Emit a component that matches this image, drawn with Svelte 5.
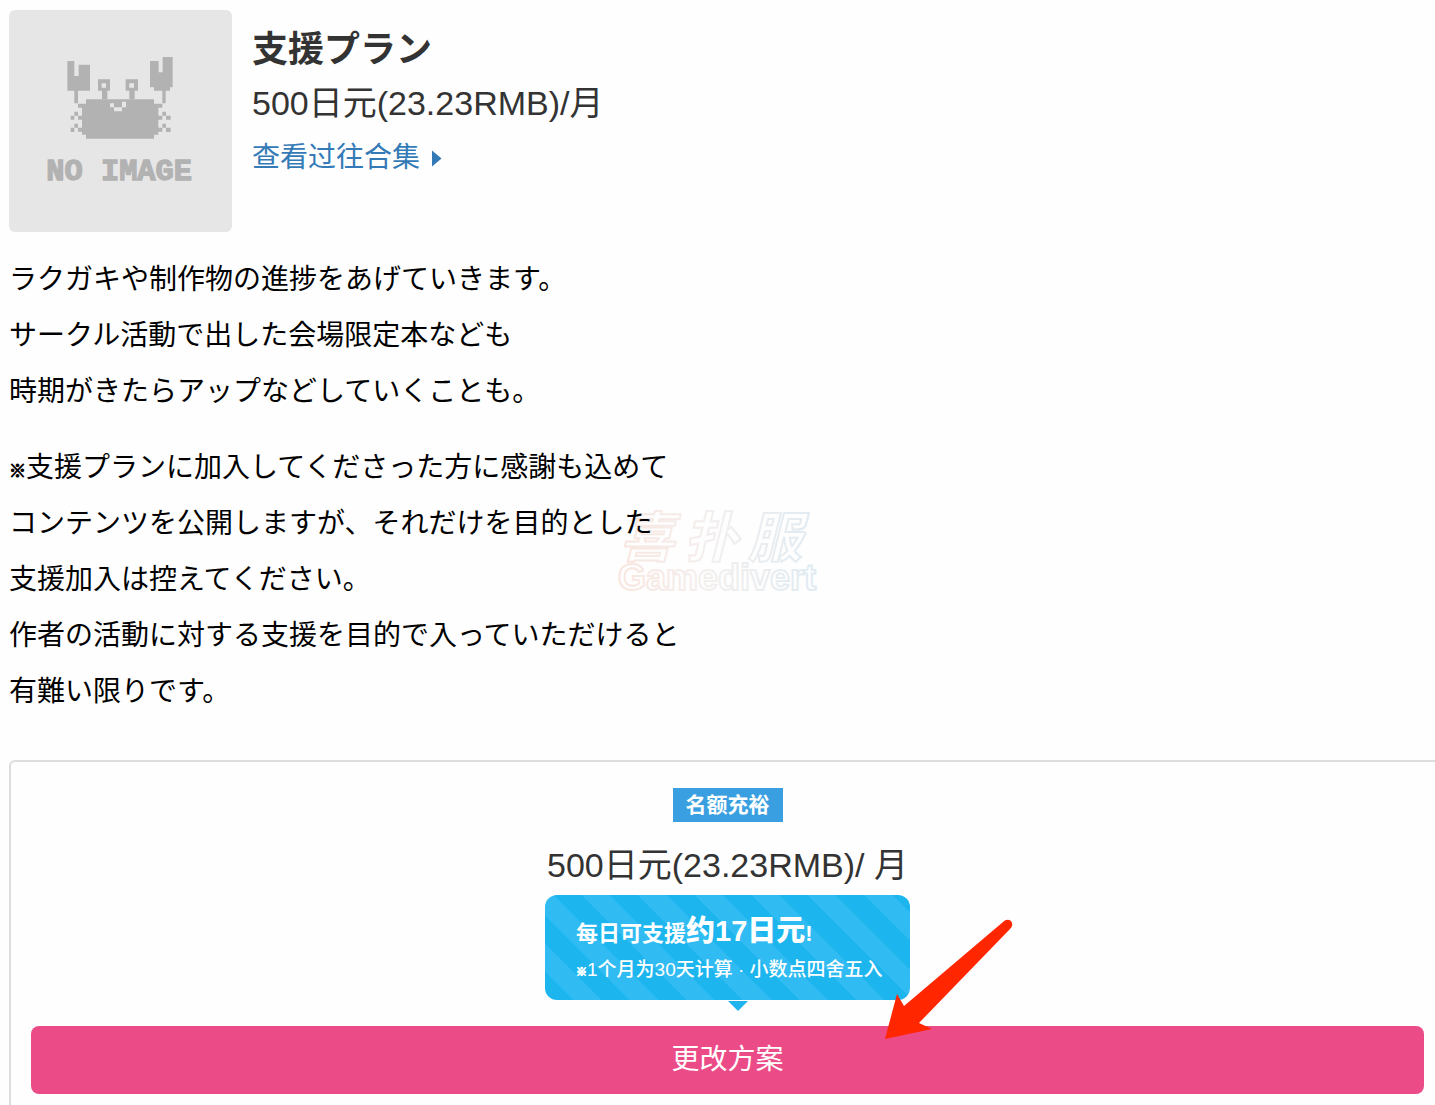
<script>
  const intro = [
    'ラクガキや制作物の進捗をあげていきます。',
    'サークル活動で出した会場限定本なども',
    '時期がきたらアップなどしていくことも。'
  ];
  const notes = [
    '支援プランに加入してくださった方に感謝も込めて',
    'コンテンツを公開しますが、それだけを目的とした',
    '支援加入は控えてください。',
    '作者の活動に対する支援を目的で入っていただけると',
    '有難い限りです。'
  ];
</script>

<main class="page">
  <header class="plan">
    <svg class="thumb" viewBox="27 30 669 666" role="img" aria-label="No image">
      <g fill="#b2b2b2">
        <path d="M202 183h21v45h13v-34h34v78h-36v38h-11v-38h-21z" />
        <path d="M450 183h26v34h12v-46h30v91h-8v10h-13v38h-10v-38h-25v-10h-12z" />
        <path fill-rule="evenodd" d="M294 238h36v34h-8v26h-16v-26h-12zM305 250v13h13v-13z" />
        <path fill-rule="evenodd" d="M377 238h37v34h-10v26h-16v-26h-11zM388 250v13h14v-13z" />
        <path d="M258 298h204v13h25v12h-12v24h12v12h-12v24h12v12h-12v9h-13v12H258v-12h-12v-9h-12v-12h12v-24h-12v-12h12v-24h-12v-12h24z" />
        <path d="M223 335h11v12h-11zM212 347h11v12h-11zM223 371h11v12h-11zM212 383h11v13h-11zM487 335h11v12h-11zM498 347h14v12h-14zM487 371h11v12h-11zM498 383h14v13h-14z" />
      </g>
      <path fill="#e6e6e6" d="M330 310h12v12h24v-17h12v17h-12v12h-24v-12h-12z" />
      <text x="139" y="540">NO IMAGE</text>
    </svg>
    <div class="info">
      <h1>支援プラン</h1>
      <p class="price">500日元(23.23RMB)/月</p>
      <a class="more" href="#archive">
        查看过往合集
        <svg class="caret" viewBox="0 0 10 17" aria-hidden="true"><path d="M0 0.500 9.500 8.500 0 16.500z" /></svg>
      </a>
    </div>
  </header>

  <section class="text" lang="ja">
    <p>
      {#each intro as line}<span class="line">{line}</span>{/each}
    </p>
    <p>
      {#each notes as line, i}<span class="line">{#if i === 0}<span class="mark">※</span>{/if}{line}</span>{/each}
    </p>
  </section>

  <section class="card">
    <span class="badge">名额充裕</span>
    <p class="cost">500日元(23.23RMB)/ 月</p>
    <div class="bubble">
      <p class="daily">每日可支援<strong>约17日元</strong>!</p>
      <p class="hint"><span class="tiny">※</span>1个月为30天计算 · 小数点四舍五入</p>
    </div>
    <div class="action">
      <button type="button">更改方案</button>
      <svg class="arrow" viewBox="885 919 128 121" aria-hidden="true">
        <path fill="#ff2600" d="M885 1039 897 994 904 1006 1003 922Q1007 918 1011 921 1014 925 1010 929L919 1023 932 1029z" />
      </svg>
    </div>
  </section>

  <svg class="watermark" viewBox="0 0 240 100" aria-hidden="true">
    <defs>
      <linearGradient id="tint" gradientUnits="userSpaceOnUse" x1="20" y1="0" x2="220" y2="0">
        <stop offset="0" stop-color="#f9e6df" />
        <stop offset="0.450" stop-color="#f3efee" />
        <stop offset="1" stop-color="#e0ebf2" />
      </linearGradient>
    </defs>
    <g class="logo">
      <text x="22" y="55">喜</text>
      <text x="86" y="55">扑</text>
      <text x="150" y="55">服</text>
    </g>
    <text class="latin" x="20" y="88">Gamedivert</text>
  </svg>
</main>

<style>
  :global(body) {
    margin: 0;
    background: #fefefe;
  }
  .page {
    position: relative;
    display: flex;
    flex-direction: column;
    box-sizing: border-box;
    min-height: 100vh;
    padding: 10px 0 0 9px;
    overflow: hidden;
    font-family: 'Liberation Sans', 'Noto Sans CJK SC', sans-serif;
    color: #333;
  }
  p,
  h1 {
    margin: 0;
  }
  .plan {
    display: flex;
    gap: 20px;
  }
  .thumb {
    flex: none;
    width: 223px;
    height: 222px;
    border-radius: 6px;
    background: #e6e6e6;
  }
  .thumb text {
    font: bold 91px 'Liberation Mono', monospace;
    fill: #b2b2b2;
    stroke: #b2b2b2;
    stroke-width: 4px;
  }
  .info {
    padding-top: 12px;
    line-height: 54px;
  }
  h1 {
    margin-bottom: 6px;
    font-family: 'Noto Sans CJK JP', sans-serif;
    font-size: 36px;
    font-weight: 700;
    line-height: 48px;
  }
  .price {
    font-size: 34px;
  }
  .more {
    display: flex;
    align-items: center;
    gap: 12px;
    font-size: 28px;
    line-height: 56px;
    color: #337ab7;
    text-decoration: none;
  }
  .caret {
    width: 10px;
    height: 17px;
    fill: currentColor;
  }
  .text {
    position: relative;
    z-index: 1;
    display: grid;
    gap: 20px;
    padding: 17px 0 43px;
    font-family: 'Noto Sans CJK JP', sans-serif;
    font-size: 28px;
    line-height: 56px;
    color: #000;
  }
  .line {
    display: block;
  }
  .mark,
  .tiny {
    line-height: 1;
    -webkit-text-stroke: 1px currentColor;
  }
  .mark {
    font-size: 17px;
  }
  .tiny {
    font-size: 11px;
  }
  .card {
    display: flex;
    flex: 1;
    flex-direction: column;
    align-items: center;
    margin-right: -11px;
    padding: 26px 20px 11px;
    border: 2px solid #dcdddd;
    border-bottom: 0;
    border-radius: 6px 6px 0 0;
  }
  .badge {
    padding: 0 13px;
    background: #3a9fe0;
    color: #fff;
    font-size: 21px;
    font-weight: 700;
    line-height: 34px;
  }
  .cost {
    margin: 19px 0 6px;
    font-size: 34px;
    line-height: 48px;
  }
  .bubble {
    position: relative;
    box-sizing: border-box;
    min-width: 365px;
    padding: 19px 26px 14px 31px;
    border-radius: 12px;
    background: repeating-linear-gradient(45deg, #1cb5ee 0 20px, #30bbf2 20px 40px);
    color: #fff;
  }
  .bubble::after {
    content: '';
    position: absolute;
    top: calc(100% + 1px);
    left: 50%;
    border: 10px solid transparent;
    border-top-color: #1fb4ee;
    border-bottom: 0;
  }
  .daily {
    font-size: 22px;
    font-weight: 700;
    line-height: 40px;
  }
  .daily strong {
    font-size: 29px;
    line-height: 1;
  }
  .hint {
    font-size: 19px;
    font-weight: 500;
    line-height: 32px;
    white-space: nowrap;
  }
  .action {
    position: relative;
    width: 100%;
    margin-top: 26px;
  }
  button {
    display: block;
    width: 100%;
    padding: 0;
    border: 0;
    border-radius: 8px;
    background: #eb4c87;
    color: #fff;
    font-family: inherit;
    font-size: 28px;
    line-height: 68px;
    cursor: pointer;
  }
  .arrow {
    position: absolute;
    top: -107px;
    left: calc(50% + 157px);
    width: 128px;
    height: 121px;
    pointer-events: none;
  }
  .watermark {
    position: absolute;
    top: 502px;
    left: calc(50% - 120px);
    width: 240px;
    height: 100px;
    overflow: visible;
    pointer-events: none;
  }
  .watermark text {
    fill: #fefefe;
    stroke: url(#tint);
    stroke-width: 2px;
  }
  .logo {
    font: italic 700 54px 'Noto Sans CJK SC', sans-serif;
  }
  .latin {
    font: bold 36px 'Liberation Sans', sans-serif;
  }
</style>
